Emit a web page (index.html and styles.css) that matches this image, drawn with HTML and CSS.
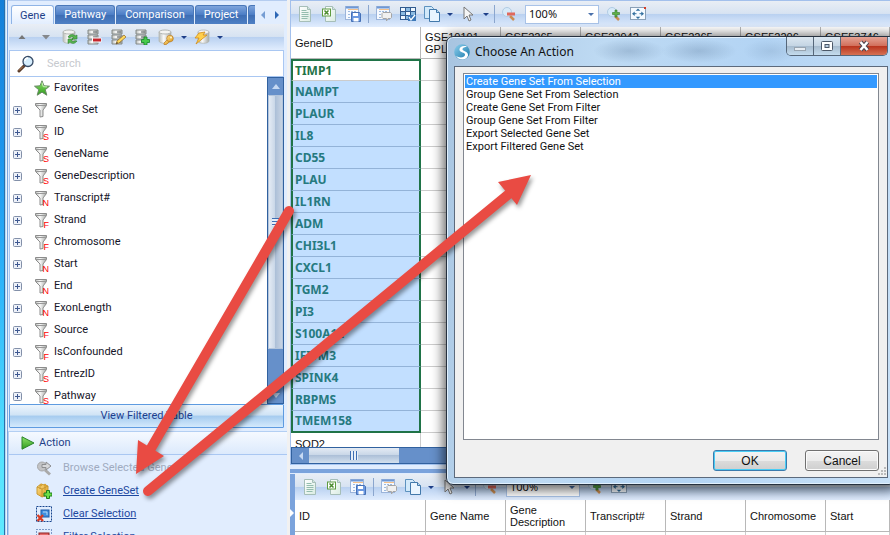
FILE: index.html
```html
<!DOCTYPE html>
<html lang="en">
<head>
<meta charset="utf-8">
<title>Gene Explorer</title>
<link rel="stylesheet" href="styles.css">
</head>
<body>
<svg class="defs" aria-hidden="true">
  <defs>
    <linearGradient id="metal" x1="0" x2="1" y1="0" y2="0"><stop offset="0" stop-color="#b9bdb9"/><stop offset=".4" stop-color="#fafafa"/><stop offset="1" stop-color="#a4a8a4"/></linearGradient>
    <linearGradient id="paper" x1="0" x2="1" y1="0" y2="1"><stop offset="0" stop-color="#fff"/><stop offset="1" stop-color="#d9ece2"/></linearGradient>
    <linearGradient id="grass" x1="0" x2="0" y1="0" y2="1"><stop offset="0" stop-color="#8fe36a"/><stop offset="1" stop-color="#2f9a1e"/></linearGradient>
    <linearGradient id="gold" x1="0" x2="1" y1="0" y2="1"><stop offset="0" stop-color="#ffe08a"/><stop offset="1" stop-color="#dc9a1c"/></linearGradient>
    <linearGradient id="orb" x1="0" x2="1" y1="0" y2="1"><stop offset="0" stop-color="#8fd0ee"/><stop offset="1" stop-color="#1476a8"/></linearGradient>
    <symbol id="up" viewBox="0 0 16 16"><path d="M4.500 10 8 6l3.500 4z" fill="#777"/></symbol>
    <symbol id="down" viewBox="0 0 16 16"><path d="M4 6h8L8 10.500z" fill="#85888c"/></symbol>
    <symbol id="drum" viewBox="0 0 16 16"><path d="M1 3v9c0 3 12 3 12 0V3z" fill="url(#metal)" stroke="#b3b8b3" stroke-width=".8"/><ellipse cx="7" cy="3" rx="6" ry="2" fill="#f4f4f2" stroke="#a4a8a4" stroke-width=".8"/></symbol>
    <symbol id="refresh" viewBox="0 0 16 16"><use href="#drum"/><path d="M6 8c2-3 5-3 7-1l2-1v4h-5l1.500-1.500C10 7.500 8.500 7.500 8 9zM15 12c-2 3-5 3-7 1l-2 1.500V10h5l-1.500 1.800c1 1 2.500 1 3.500 0z" fill="#58b54d" stroke="#2c7f32" stroke-width=".6"/></symbol>
    <symbol id="stack" viewBox="0 0 16 16"><path d="M2 1h10v4H2zM2 6h10v4H2zM2 11h10v4H2z" fill="url(#metal)" stroke="#858a88"/><path d="M7 3h4M7 8h4M7 13h4" stroke="#60676a"/></symbol>
    <symbol id="stackminus" viewBox="0 0 16 16"><use href="#stack"/><rect x="6" y="8.500" width="9.500" height="5" rx="1" fill="#fff"/><path d="M7 11h8" stroke="#c6262c" stroke-width="3"/></symbol>
    <symbol id="stackedit" viewBox="0 0 16 16"><use href="#stack"/><path d="m6 15 1-3 7-6 2 2-7 6z" fill="#ffd85d" stroke="#8e6627" stroke-width=".7"/><path d="m6 15 2-1-1-1z" fill="#333"/></symbol>
    <symbol id="stackplus" viewBox="0 0 16 16"><use href="#stack"/><path d="M10 8h3v2.500h2.500v3H13V16h-3v-2.500H7.500v-3H10z" fill="#48ca4b" stroke="#17852a" stroke-width=".8"/></symbol>
    <symbol id="key" viewBox="0 0 16 16"><use href="#drum"/><g fill="url(#gold)" stroke="#b97921" stroke-width=".7"><path d="m6 14 4-4 2 2-3 3-1 .5H6z"/><circle cx="12" cy="9.500" r="3.300"/></g><circle cx="13" cy="8.500" r="1" fill="#fff4cc"/></symbol>
    <symbol id="bolt" viewBox="0 0 16 16"><path d="M4 3v9c0 3 11 3 11 0V3z" fill="url(#metal)" stroke="#b3b8b3" stroke-width=".8"/><ellipse cx="9.500" cy="3" rx="5.500" ry="2" fill="#f4f4f2" stroke="#aaa" stroke-width=".7"/><path d="m5 4 6-1-2 3h4L2 15l3-6H1z" fill="#ffcf4b" stroke="#d28b17" stroke-width=".8"/></symbol>
    <symbol id="glass" viewBox="0 0 18 18"><path d="m2 16 5-5" stroke="#583a28" stroke-width="3" stroke-linecap="round"/><path d="m2 15.500 4-4" stroke="#c58c62"/><circle cx="11" cy="6.500" r="5" fill="#d7eefd" stroke="#374b66" stroke-width="1.300"/><path d="M8 6c0-2 1.500-3 3-3" stroke="#fff" stroke-width="1.500" fill="none"/></symbol>
    <symbol id="star" viewBox="0 0 16 16"><path d="m8 .8 2 5 5.500.4-4.200 3.500 1.500 5.500L8 12.200l-4.800 3 1.500-5.500L.5 6.200 6 5.800z" fill="url(#grass)" stroke="#6a8a66"/><path d="m8 2.500 1.200 4.200 3.800.2" stroke="#c7f0b5" fill="none"/></symbol>
    <symbol id="funnel" viewBox="0 0 16 16"><path d="M1.500 1.500h11v2L9 8v6.500l-3 .5V8L1.500 3.500z" fill="url(#metal)" stroke="#8c8c8c"/><path d="M2 3.500h10" stroke="#999"/></symbol>
    <symbol id="plusbox" viewBox="0 0 9 9"><rect x=".5" y=".5" width="8" height="8" rx="1" fill="#edf1f9" stroke="#8390a9"/><path d="M2 4.500h5M4.500 2v5" stroke="#3e5890"/></symbol>
    <symbol id="play" viewBox="0 0 14 14"><path d="M1 .8 13 7 1 13.200z" fill="url(#grass)" stroke="#2b842a"/></symbol>
    <symbol id="browse" viewBox="0 0 16 16"><path d="m9 10 5 4.500" stroke="#aaa" stroke-width="3"/><circle cx="6" cy="6.500" r="4.500" fill="#c2c3c5" stroke="#a6a7a9"/><path d="M6 4.500h4V2l5 4-5 4V7.500H6z" fill="#d6d7d9" stroke="#8d8e90"/></symbol>
    <symbol id="box" viewBox="0 0 16 16"><path d="M1 4 5 1l7 2v9l-6 2-5-3z" fill="url(#gold)" stroke="#c99a35"/><path d="m1 4 5 2 6-3M6 6v8M4 2v4M9 1.500V7" stroke="#c08f2b" stroke-width=".8" fill="none"/><circle cx="5" cy="2" r="1.300" fill="#d7a437"/><circle cx="9" cy="2" r="1.300" fill="#d7a437"/><path d="M10.500 7.500h3V10H16v3h-2.500v2.500h-3V13H8v-3h2.500z" fill="#6cdf48" stroke="#1f7e1d"/></symbol>
    <symbol id="clear" viewBox="0 0 16 16"><path d="M.5 .5h15v15H.5z" fill="none" stroke="#17458e" stroke-dasharray="2 1"/><rect x="5" y="4" width="8" height="7" fill="#3e8fe0" stroke="#1f5ba8"/><path d="M7 6h4v3" fill="none" stroke="#b4dafa"/><path d="m1.500 9 5.500 6M7 9l-5.500 6" stroke="#d63c25" stroke-width="2.400"/></symbol>
    <symbol id="filtersel" viewBox="0 0 16 16"><path d="M.5 .5h15v15H.5z" fill="none" stroke="#17458e" stroke-dasharray="1 2"/><rect x="3" y="4" width="10" height="8" fill="#e56b6b" stroke="#8e2020"/></symbol>
    <symbol id="page" viewBox="0 0 16 16"><path d="M2.500 .5h8l3 3v12h-11z" fill="url(#paper)" stroke="#a6beb8"/><path d="M10.500 .5v3h3" fill="#d2e5e0" stroke="#a6beb8"/><path d="M4.500 4.500h5M4.500 6.500h7M4.500 8.500h7M4.500 10.500h7M4.500 12.500h6" stroke="#94bdae"/></symbol>
    <symbol id="excel" viewBox="0 0 16 16"><path d="M4.500 .5h7l3 3v12h-10z" fill="url(#paper)" stroke="#a6beb8"/><path d="M11.500 .5v3h3" fill="#d2e5e0" stroke="#a6beb8"/><rect x="1.500" y="3" width="8" height="7" fill="#fff" stroke="#5f9c40"/><path d="m3.500 4.500 4 4M7.500 4.500l-4 4" stroke="#4a8a2c" stroke-width="1.500"/></symbol>
    <symbol id="sheet" viewBox="0 0 16 16"><rect x=".5" y=".5" width="13" height="13" fill="#f5f9ff" stroke="#9bb4da"/><path d="M1 1.500h12" stroke="#6f98d4" stroke-width="2"/><path d="M3 3.500h10" stroke="#f3c08a"/><path d="M3 5.500h8M3 8.500h8M3 11.500h8" stroke="#9dbae0" stroke-dasharray="2 1"/></symbol>
    <symbol id="save" viewBox="0 0 16 16"><use href="#sheet"/><path d="M6.500 6.500h8l1 1v8h-9z" fill="#6b98e0" stroke="#4570b6"/><path d="M8 7h5v3H8zM8.500 12h5v3.500h-5z" fill="#fff"/></symbol>
    <symbol id="comment" viewBox="0 0 16 16"><use href="#sheet"/><path d="M7 6.500h7.500l1 1v4l-1 1H12L10.500 15v-2.500H7l-1-1v-4z" fill="#f0f0f0" stroke="#a5a5a5"/></symbol>
    <symbol id="grid" viewBox="0 0 16 16"><path d="M0 1h16v13H0z" fill="#315b8e"/><path d="M1 2h4v3H1zM11 2h4v3h-4zM6 6h4v3H6zM1 10h4v3H1z" fill="#eef7ff"/><path d="M6 2h4v3H6zM1 6h4v3H1zM11 6h4v3h-4zM6 10h4v3H6z" fill="#8cbbe2"/><path d="M8 9h8v6H8z" fill="#3d78b8"/><path d="m9 11 2 3 4-5" fill="none" stroke="#fff" stroke-width="1.300"/></symbol>
    <symbol id="copy" viewBox="0 0 16 16"><path d="M.5 .5h7l2 2v10h-9z" fill="#d2e9fa" stroke="#5d92bf"/><path d="M5.500 3.500h7l3 3v9h-10z" fill="#e9f5ff" stroke="#4279ab"/><path d="M12.500 3.500v3h3" fill="#b9daf2" stroke="#4279ab"/></symbol>
    <symbol id="pointer" viewBox="0 0 16 16"><path d="M4 1v12l3-3 2 5 2-1-2-5h4z" fill="#f5f5f5" stroke="#777"/></symbol>
    <symbol id="zoomout" viewBox="0 0 16 16"><path d="m9 10 4 4" stroke="#cb8d51" stroke-width="2.500"/><circle cx="6" cy="6" r="4.500" fill="#d7eaf9" stroke="#b1cce4"/><path d="M6 8h8" stroke="#e0695d" stroke-width="3"/></symbol>
    <symbol id="zoomin" viewBox="0 0 16 16"><path d="m9 10 4 4" stroke="#cb8d51" stroke-width="2.500"/><circle cx="6" cy="6" r="4.500" fill="#d7eaf9" stroke="#b1cce4"/><path d="M9 4h2v2.500h2.500v2H11V11H9V8.500H6.500v-2H9z" fill="#5fb049" stroke="#347b29" stroke-width=".6"/></symbol>
    <symbol id="fit" viewBox="0 0 16 16"><rect x=".5" y="1.500" width="15" height="12" fill="#f5faff" stroke="#8aa0b7"/><path d="M14 2h2" stroke="#d63c25" stroke-width="2"/><path d="m8 2.500 2.300 2.300H5.700zM8 13l2.300-2.300H5.700zM2 7.700l2.700-2.300V10zM14 7.700l-2.700-2.300V10z" fill="#316e9e"/><path d="M4 7.700h2.500M9.500 7.700H12" stroke="#316e9e"/></symbol>
    <symbol id="orbicon" viewBox="0 0 16 16"><circle cx="8" cy="8" r="7.800" fill="url(#orb)"/><path d="M13 2.500C9 1 5 3 5.500 6s6 2 5.500 5-6 3-9 1c3 5 11 4.500 12-.5C14.500 7 8.500 7.500 8.500 5.500S11 3 13 2.500z" fill="#fff"/></symbol>
  </defs>
</svg>

<div class="app">
  <div class="desktop"></div>

  <aside class="sidebar">
    <nav class="tabs">
      <button class="tab tab-on">Gene</button>
      <button class="tab">Pathway</button>
      <button class="tab">Comparison</button>
      <button class="tab">Project</button>
      <span class="tab tab-cut"></span>
      <button class="tabnav tabnav-dim" aria-label="Previous tabs"><span class="tri tri-left"></span></button>
      <button class="tabnav" aria-label="More tabs"><span class="tri tri-right"></span></button>
    </nav>
    <div class="side-body">
      <div class="bar side-bar">
        <button class="tool" aria-label="Move up"><svg><use href="#up"/></svg></button>
        <button class="tool" aria-label="Move down"><svg><use href="#down"/></svg></button>
        <button class="tool" aria-label="Refresh"><svg><use href="#refresh"/></svg></button>
        <button class="tool" aria-label="Remove"><svg><use href="#stackminus"/></svg></button>
        <button class="tool" aria-label="Edit"><svg><use href="#stackedit"/></svg></button>
        <button class="tool" aria-label="Add"><svg><use href="#stackplus"/></svg></button>
        <button class="tool" aria-label="Key"><svg><use href="#key"/></svg></button>
        <button class="caret" aria-label="Key options"></button>
        <button class="tool" aria-label="Run"><svg><use href="#bolt"/></svg></button>
        <button class="caret" aria-label="Run options"></button>
      </div>
      <label class="search"><svg><use href="#glass"/></svg><input type="text" placeholder="Search" aria-label="Search"></label>
      <div class="tree-wrap">
        <ul class="tree">
          <li><i></i><svg class="ico"><use href="#star"/></svg>Favorites</li>
          <li><svg class="plus"><use href="#plusbox"/></svg><span class="fun"><svg class="ico"><use href="#funnel"/></svg></span>Gene Set</li>
          <li><svg class="plus"><use href="#plusbox"/></svg><span class="fun"><svg class="ico"><use href="#funnel"/></svg><b>S</b></span>ID</li>
          <li><svg class="plus"><use href="#plusbox"/></svg><span class="fun"><svg class="ico"><use href="#funnel"/></svg><b>S</b></span>GeneName</li>
          <li><svg class="plus"><use href="#plusbox"/></svg><span class="fun"><svg class="ico"><use href="#funnel"/></svg><b>S</b></span>GeneDescription</li>
          <li><svg class="plus"><use href="#plusbox"/></svg><span class="fun"><svg class="ico"><use href="#funnel"/></svg><b>N</b></span>Transcript#</li>
          <li><svg class="plus"><use href="#plusbox"/></svg><span class="fun"><svg class="ico"><use href="#funnel"/></svg><b>F</b></span>Strand</li>
          <li><svg class="plus"><use href="#plusbox"/></svg><span class="fun"><svg class="ico"><use href="#funnel"/></svg><b>F</b></span>Chromosome</li>
          <li><svg class="plus"><use href="#plusbox"/></svg><span class="fun"><svg class="ico"><use href="#funnel"/></svg><b>N</b></span>Start</li>
          <li><svg class="plus"><use href="#plusbox"/></svg><span class="fun"><svg class="ico"><use href="#funnel"/></svg><b>N</b></span>End</li>
          <li><svg class="plus"><use href="#plusbox"/></svg><span class="fun"><svg class="ico"><use href="#funnel"/></svg><b>N</b></span>ExonLength</li>
          <li><svg class="plus"><use href="#plusbox"/></svg><span class="fun"><svg class="ico"><use href="#funnel"/></svg><b>F</b></span>Source</li>
          <li><svg class="plus"><use href="#plusbox"/></svg><span class="fun"><svg class="ico"><use href="#funnel"/></svg><b>F</b></span>IsConfounded</li>
          <li><svg class="plus"><use href="#plusbox"/></svg><span class="fun"><svg class="ico"><use href="#funnel"/></svg><b>S</b></span>EntrezID</li>
          <li><svg class="plus"><use href="#plusbox"/></svg><span class="fun"><svg class="ico"><use href="#funnel"/></svg><b>S</b></span>Pathway</li>
        </ul>
        <div class="vscroll">
          <span class="vbtn"><span class="tri tri-up"></span></span>
          <span class="vthumb"><span class="vgrip"></span></span>
          <span class="vbtn vbtn-low"><span class="tri tri-down"></span></span>
        </div>
      </div>
      <button class="view">View Filtered Table</button>
    </div>
    <section class="actions">
      <h2><svg><use href="#play"/></svg>Action</h2>
      <ul>
        <li class="off"><svg><use href="#browse"/></svg><span>Browse Selected Genes</span></li>
        <li><svg><use href="#box"/></svg><a href="#">Create GeneSet</a></li>
        <li><svg><use href="#clear"/></svg><a href="#">Clear Selection</a></li>
        <li><svg><use href="#filtersel"/></svg><a href="#">Filter Selection</a></li>
      </ul>
    </section>
  </aside>

  <main class="main">
    <section class="pane top">
      <div class="bar main-bar">
        <button class="tool" aria-label="Text export"><svg><use href="#page"/></svg></button>
        <button class="tool" aria-label="Excel export"><svg><use href="#excel"/></svg></button>
        <button class="tool" aria-label="Save table"><svg><use href="#save"/></svg></button>
        <span class="sep"></span>
        <button class="tool" aria-label="Comment"><svg><use href="#comment"/></svg></button>
        <button class="tool" aria-label="Columns"><svg><use href="#grid"/></svg></button>
        <button class="tool" aria-label="Copy"><svg><use href="#copy"/></svg></button>
        <button class="caret" aria-label="Copy options"></button>
        <button class="tool" aria-label="Pointer"><svg><use href="#pointer"/></svg></button>
        <button class="caret" aria-label="Pointer options"></button>
        <span class="sep sep-tight"></span>
        <button class="tool" aria-label="Zoom out"><svg><use href="#zoomout"/></svg></button>
        <span class="combo"><select aria-label="Zoom"><option>100%</option></select></span>
        <button class="tool" aria-label="Zoom in"><svg><use href="#zoomin"/></svg></button>
        <button class="tool" aria-label="Fit"><svg><use href="#fit"/></svg></button>
      </div>
      <div class="sheet">
        <table class="genes">
          <thead><tr><th>GeneID</th><th>GSE10191<br>GPL570</th><th>GSE2265<br>&nbsp;</th><th>GSE22942<br>&nbsp;</th><th>GSE2265<br>&nbsp;</th><th>GSE52206<br>&nbsp;</th><th>GSE53746<br>&nbsp;</th></tr></thead>
          <tbody>
            <tr class="cur"><td>TIMP1</td><td colspan="6"></td></tr>
            <tr class="sel"><td>NAMPT</td><td colspan="6"></td></tr>
            <tr class="sel"><td>PLAUR</td><td colspan="6"></td></tr>
            <tr class="sel"><td>IL8</td><td colspan="6"></td></tr>
            <tr class="sel"><td>CD55</td><td colspan="6"></td></tr>
            <tr class="sel"><td>PLAU</td><td colspan="6"></td></tr>
            <tr class="sel"><td>IL1RN</td><td colspan="6"></td></tr>
            <tr class="sel"><td>ADM</td><td colspan="6"></td></tr>
            <tr class="sel"><td>CHI3L1</td><td colspan="6"></td></tr>
            <tr class="sel"><td>CXCL1</td><td colspan="6"></td></tr>
            <tr class="sel"><td>TGM2</td><td colspan="6"></td></tr>
            <tr class="sel"><td>PI3</td><td colspan="6"></td></tr>
            <tr class="sel"><td>S100A12</td><td colspan="6"></td></tr>
            <tr class="sel"><td>IFITM3</td><td colspan="6"></td></tr>
            <tr class="sel"><td>SPINK4</td><td colspan="6"></td></tr>
            <tr class="sel"><td>RBPMS</td><td colspan="6"></td></tr>
            <tr class="sel last"><td>TMEM158</td><td colspan="6"></td></tr>
            <tr class="plain"><td>SOD2</td><td colspan="6"></td></tr>
          </tbody>
        </table>
      </div>
      <div class="hscroll"><span class="hbtn"><span class="tri tri-left"></span></span><span class="hthumb"><span class="hgrip"></span></span></div>
    </section>
    <div class="splitter"></div>
    <section class="pane bottom">
      <div class="handle"><span class="tri tri-right"></span></div>
      <div class="bottom-body">
        <div class="bar main-bar">
          <button class="tool" aria-label="Text export"><svg><use href="#page"/></svg></button>
          <button class="tool" aria-label="Excel export"><svg><use href="#excel"/></svg></button>
          <button class="tool" aria-label="Save table"><svg><use href="#save"/></svg></button>
          <span class="sep"></span>
          <button class="tool" aria-label="Comment"><svg><use href="#comment"/></svg></button>
          <button class="tool" aria-label="Copy"><svg><use href="#copy"/></svg></button>
          <button class="caret" aria-label="Copy options"></button>
          <button class="tool" aria-label="Pointer"><svg><use href="#pointer"/></svg></button>
          <button class="caret" aria-label="Pointer options"></button>
          <span class="sep sep-tight"></span>
          <button class="tool" aria-label="Zoom out"><svg><use href="#zoomout"/></svg></button>
          <span class="combo"><select aria-label="Zoom"><option>100%</option></select></span>
          <button class="tool" aria-label="Zoom in"><svg><use href="#zoomin"/></svg></button>
          <button class="tool" aria-label="Fit"><svg><use href="#fit"/></svg></button>
        </div>
        <table class="details">
          <thead><tr><th>ID</th><th>Gene Name</th><th>Gene<br>Description</th><th>Transcript#</th><th>Strand</th><th>Chromosome</th><th>Start</th></tr></thead>
          <tbody><tr><td></td><td></td><td></td><td></td><td></td><td></td><td></td></tr></tbody>
        </table>
      </div>
    </section>
  </main>
</div>

<div class="dialog" role="dialog" aria-labelledby="dlg-title">
  <header class="titlebar">
    <svg><use href="#orbicon"/></svg>
    <h1 id="dlg-title">Choose An Action</h1>
    <div class="winbtns">
      <button class="wb" aria-label="Minimize"><svg viewBox="0 0 14 12"><rect x="1.500" y="7.500" width="11" height="3" fill="#e7edf3" stroke="#98a4b0"/></svg></button>
      <button class="wb" aria-label="Maximize"><svg viewBox="0 0 14 12"><rect x="1.500" y="1.500" width="11" height="9" rx="1" fill="#fff" stroke="#4c5868"/><rect x="5" y="4.500" width="4" height="3" fill="#b9cde0" stroke="#4c5868"/></svg></button>
      <button class="wb wb-close" aria-label="Close"><svg viewBox="0 0 14 12"><path d="m3.500 2 7 8m0-8-7 8" stroke="#4e4650" stroke-width="4.500"/><path d="m3.500 2 7 8m0-8-7 8" stroke="#fff" stroke-width="2.500"/></svg></button>
    </div>
  </header>
  <div class="client">
    <select class="list" size="6" aria-label="Action">
      <option selected>Create Gene Set From Selection</option>
      <option>Group Gene Set From Selection</option>
      <option>Create Gene Set From Filter</option>
      <option>Group Gene Set From Filter</option>
      <option>Export Selected Gene Set</option>
      <option>Export Filtered Gene Set</option>
    </select>
    <footer>
      <button class="btn btn-ok">OK</button>
      <button class="btn">Cancel</button>
      <svg class="grip" viewBox="0 0 9 9"><path d="M6 0h2v2H6zM3 3h2v2H3zM6 3h2v2H6zM0 6h2v2H0zM3 6h2v2H3zM6 6h2v2H6z" fill="#bbb"/></svg>
    </footer>
  </div>
</div>

<svg class="arrows" viewBox="0 0 890 535" aria-hidden="true">
  <g stroke="#e94b43" stroke-width="10" stroke-linecap="round"><path d="M289 211 150 450"/><path d="M148 491 510 193"/></g>
  <path d="M136 474 138 440 164 456zM531 175 498 182 517 205z" fill="#e94b43"/>
</svg>
</body>
</html>
```
FILE: styles.css
```css
* { box-sizing: border-box; }
body { margin: 0; height: 100vh; overflow: hidden; position: relative; font: 11px/14px Roboto, "Noto Sans", sans-serif; color: #111; background: #e1edfe; }
button { font: inherit; color: inherit; border: 0; padding: 0; background: none; }
ul { list-style: none; margin: 0; padding: 0; }
h1, h2 { margin: 0; font-weight: normal; }
.defs { position: absolute; width: 0; height: 0; }

.app { display: flex; height: 100%; overflow: hidden; }
.desktop { flex: 0 0 8px; background: linear-gradient(90deg, transparent 4px, #2c6fa8 4px 5px, #b5dcf7 5px 6px, #eaf3ff 6px 7px, #7ba6dd 7px), linear-gradient(#1580d8, #1d97ee 30%, #2fb7fb 55%, #55e2ff 85%, #5feaff); }

.sidebar { flex: 0 0 282px; display: flex; flex-direction: column; background: #e1edfe; border-right: 3px solid #f1f1f1; }
.tabs { flex: none; display: flex; height: 24px; padding: 4px 4px 0 3px; gap: 1px; border-top: 1px solid #b5cdf0; }
.tab { flex: none; height: 19px; padding: 0 8px; color: #fff; border: 1px solid #4a78b9; border-bottom: 0; border-radius: 3px 3px 0 0; background: linear-gradient(#7fa5dc, #4a7cc5 50%, #3d6db4 50%, #4f80c4); }
.tab-on { height: 20px; color: #1e3f88; border-color: #8fb4e6; background: linear-gradient(#fff, #e1edfe); }
.tab-cut { width: 7px; padding: 0; border-right: 0; border-radius: 3px 0 0 0; }
.tabnav { flex: 1; display: flex; align-items: center; justify-content: center; }
.tri { display: block; width: 0; height: 0; border: 4px solid transparent; }
.tri-left { border-right: 4px solid #2d67b5; border-left: 0; }
.tri-right { border-left: 4px solid #2d67b5; border-right: 0; }
.tri-up { border-bottom: 5px solid #c6d9f3; border-top: 0; }
.tri-down { border-top: 5px solid #c6d9f3; border-bottom: 0; }
.tabnav-dim { opacity: .6; }

.side-body { flex: 0 0 404px; min-height: 0; display: flex; flex-direction: column; padding: 0 3px 0 1px; }
.bar { flex: none; display: flex; align-items: center; background: linear-gradient(#e9eef5, #d7e3f2 48%, #b8d0f0 50%, #e1edfe); }
.side-bar { height: 26px; padding-left: 1px; }
.tool { flex: 0 0 24px; height: 24px; display: flex; align-items: center; justify-content: center; }
.tool svg { width: 16px; height: 16px; }
.caret { flex: 0 0 12px; height: 24px; display: flex; align-items: center; justify-content: center; }
.caret::before { content: ""; border: 3px solid transparent; border-top-color: #1e3f88; border-bottom: 0; }
.search { flex: none; height: 27px; display: flex; align-items: center; gap: 9px; padding-left: 7px; border: 1px solid #a9c7f2; background: #fff; }
.search svg { width: 18px; height: 18px; }
.search input { flex: 1; min-width: 0; border: 0; outline: 0; padding: 0 3px; font: inherit; background: none; }
.search input::placeholder { color: #c6c9ce; }
.tree-wrap { flex: 1; min-height: 0; display: flex; overflow: hidden; border-left: 1px solid #a9c7f2; background: #fff; }
.tree { flex: 1; min-width: 0; }
.tree li { height: 22px; display: flex; align-items: center; padding-left: 3px; color: #151528; }
.tree .plus, .tree i { width: 9px; height: 9px; margin-right: 12px; flex: none; }
.ico { width: 16px; height: 16px; display: block; }
.tree li > .ico { margin-right: 4px; }
.fun { position: relative; margin-right: 3px; width: 17px; flex: none; }
.fun b { position: absolute; right: 2px; bottom: -1px; font: 9px/8px "Liberation Sans", sans-serif; color: #f00; }
.vscroll { flex: 0 0 17px; display: flex; flex-direction: column; border: 1px solid #31619f; background: #6690ca; }
.vbtn { flex: 0 0 17px; display: flex; align-items: center; justify-content: center; }
.vthumb { flex: 1; display: flex; align-items: center; justify-content: center; background: linear-gradient(90deg, #e4ebf4, #c8d6e7 48%, #adc0d8 50%, #c7d3e3); border: 1px solid #b3c5dc; }
.vbtn-low { flex-basis: 54px; align-items: flex-end; padding-bottom: 5px; }
.vgrip { width: 7px; height: 8px; background: repeating-linear-gradient(#3e6eb3 0 1px, #e6eef8 1px 3px); }
.view { flex: 0 0 24px; color: #1e3f8f; border: 1px solid #5e9be0; border-radius: 1px; background: linear-gradient(#edf5fd, #cfe3f5 46%, #a5cbef 50%, #d3e9fc); }

.actions { flex: 1; min-height: 0; margin: 3px 0 0; border-top: 1px solid #b3cff3; border-left: 1px solid #b3cff3; }
.actions h2 { height: 23px; display: flex; align-items: center; gap: 4px; padding-left: 12px; font-size: 11px; color: #1e3f88; border-bottom: 1px solid #a9c7f2; background: linear-gradient(#f5f9ff, #dceafc); }
.actions h2 svg { width: 14px; height: 14px; }
.actions ul { padding: 1px 0 0 27px; }
.actions li { height: 23px; display: flex; align-items: center; gap: 11px; white-space: nowrap; }
.actions li svg { width: 16px; height: 16px; flex: none; }
.actions a { color: #1e49a0; }
.off { color: #9fabc0; }

.main { flex: 1; min-width: 0; display: flex; flex-direction: column; font-family: "Liberation Sans", sans-serif; }
.pane { min-width: 0; }
.top { flex: 0 0 465px; min-height: 0; display: flex; flex-direction: column; border-left: 1px solid #a3c0ec; border-bottom: 1px solid #a9c7f2; }
.main-bar { height: 27px; padding-left: 2px; border-top: 1px solid #a3c0ec; }
.sep { flex: none; width: 1px; height: 18px; margin: 0 3px; background: #8ba6ce; }
.sep-tight { margin: 0 2px; }
.combo { flex: 0 0 74px; height: 19px; margin: 0 3px 0 4px; position: relative; border: 1px solid #a9c3e8; background: #fff; }
.combo::after { content: ""; position: absolute; right: 4px; top: 7px; border: 3px solid transparent; border-top-color: #4a71ab; border-bottom: 0; pointer-events: none; }
.combo select { display: block; appearance: none; width: 100%; height: 100%; border: 0; padding: 0 3px; background: none; font: 11px/14px "Noto Sans", sans-serif; color: #111; }
.sheet { flex: 1; min-height: 0; overflow: hidden; background: #fff; }
table { border-collapse: separate; border-spacing: 0; table-layout: fixed; width: 100%; background: #fff; }
th { height: 32px; padding: 0 4px; text-align: left; font-weight: normal; font-size: 11px; line-height: 12px; border-right: 1px solid #b8b8b8; border-bottom: 1px solid #b8b8b8; overflow: hidden; white-space: nowrap; }
th:not(:first-child) { width: 80px; }
.genes th:last-child, .details th:last-child { width: auto; }
.genes th:first-child { width: 130px; }
.genes td { height: 22px; padding: 0 4px; border-bottom: 1px solid #ccc; }
.genes td:first-child { font: bold 12px/14px "Noto Sans", sans-serif; border-left: 2px solid #1f7347; border-right: 2px solid #1f7347; padding-left: 2px; }
.genes .cur td:first-child { color: #1f7347; border-top: 2px solid #1f7347; }
.genes .sel td:first-child { color: #267a80; background: #c2dfff; border-bottom-color: #93b3d8; }
.genes .last td:first-child { border-bottom: 2px solid #1f7347; }
.genes .plain td:first-child { font: 11px/14px "Liberation Sans", sans-serif; border-left: 0; border-right: 1px solid #ccc; padding-left: 4px; }
.hscroll { flex: 0 0 17px; display: flex; border: 1px solid #31619f; background: #6690ca; }
.hbtn { flex: 0 0 17px; display: flex; align-items: center; justify-content: center; }
.hbtn .tri-left { border-right-color: #c6d9f3; }
.hthumb { flex: 0 0 90px; display: flex; align-items: center; justify-content: center; background: linear-gradient(#e4ebf4, #c8d6e7 48%, #adc0d8 50%, #d4e1ef); }
.hgrip { width: 8px; height: 9px; background: repeating-linear-gradient(90deg, #3e6eb3 0 1px, #e6eef8 1px 3px); }
.splitter { flex: 0 0 9px; background: linear-gradient(#e1edfe 4px, #7ba3dc 4px 8px, #e1edfe 8px); }
.bottom { flex: 1; display: flex; min-height: 0; }
.handle { flex: 0 0 5px; background: #7ba3dc; padding-top: 35px; }
.handle .tri { border-left-color: #fff; }
.bottom-body { flex: 1; min-width: 0; background: #fff; }
.bottom .main-bar { height: 26px; border-top: 0; padding-left: 3px; }
.details th:first-child { width: 131px; }
.details td { height: 22px; border-right: 1px solid #ccc; }

.dialog { position: absolute; left: 446px; right: -6px; top: 36px; height: 449px; display: flex; flex-direction: column; padding: 0 7px 6px; border: 1px solid #26313f; border-radius: 7px; background: radial-gradient(36px 12px at 182px 14px, rgba(70, 100, 135, .25), transparent), radial-gradient(38px 12px at 252px 14px, rgba(70, 100, 135, .25), transparent), radial-gradient(28px 12px at 324px 14px, rgba(70, 100, 135, .15), transparent), linear-gradient(100deg, #a7c4e0 0, #bedaf3 30%, #b3d4f4 60%, #c9e1f7); box-shadow: inset 0 0 0 1px #e1f0fd, 0 2px 12px 3px rgba(0, 0, 0, .6); font-family: "Liberation Sans", sans-serif; }
.titlebar { flex: 0 0 29px; display: flex; align-items: center; gap: 5px; }
.titlebar > svg { width: 16px; height: 16px; }
.titlebar h1 { flex: 1; font: 12px/16px "Noto Sans", sans-serif; color: #111; }
.winbtns { align-self: flex-start; display: flex; border: 1px solid #56677a; border-top: 0; border-radius: 0 0 5px 5px; overflow: hidden; }
.wb { width: 27px; height: 18px; display: flex; align-items: center; justify-content: center; border-right: 1px solid #56677a; background: linear-gradient(#dbe7f1, #c5d5e4 48%, #a6bacd 50%, #c4dcee); }
.wb svg { width: 14px; height: 12px; }
.wb-close { width: 46px; border-right: 0; background: linear-gradient(#e5a395, #d2705c 48%, #b8321c 50%, #d67153); }
.client { flex: 1; min-height: 0; display: flex; flex-direction: column; padding: 6px 8px 6px; border: 1px solid #5c6a7c; background: #f0f0f0; }
.list { flex: 1; width: 100%; padding: 1px; border: 1px solid #828790; border-radius: 0; background: #fff; font: 11px/13px Roboto, "Liberation Sans", sans-serif; color: #111; overflow: hidden; outline: 0; }
.list option { padding: 0 1px; min-height: 13px; height: 13px; line-height: 13px; }
.list option:checked { color: #fff; background: #39f linear-gradient(#39f, #39f); }
.client footer { flex: none; display: flex; justify-content: flex-end; gap: 18px; padding-top: 10px; position: relative; }
.btn { width: 74px; height: 21px; border: 1px solid #707070; border-radius: 3px; background: linear-gradient(#f3f3f3, #ebebeb 50%, #dcdcdc 50%, #cfcfcf); box-shadow: inset 0 0 0 1px #fbfbfb; font-size: 12px; }
.btn-ok { border-color: #3b7bad; box-shadow: inset 0 0 0 1px #49cdf5; }
.grip { position: absolute; right: -8px; bottom: -5px; width: 9px; height: 9px; }
.arrows { position: absolute; left: 0; top: 0; width: 890px; height: 535px; pointer-events: none; fill: none; filter: drop-shadow(2px 3px 2px rgba(0, 0, 0, .4)); }
```
